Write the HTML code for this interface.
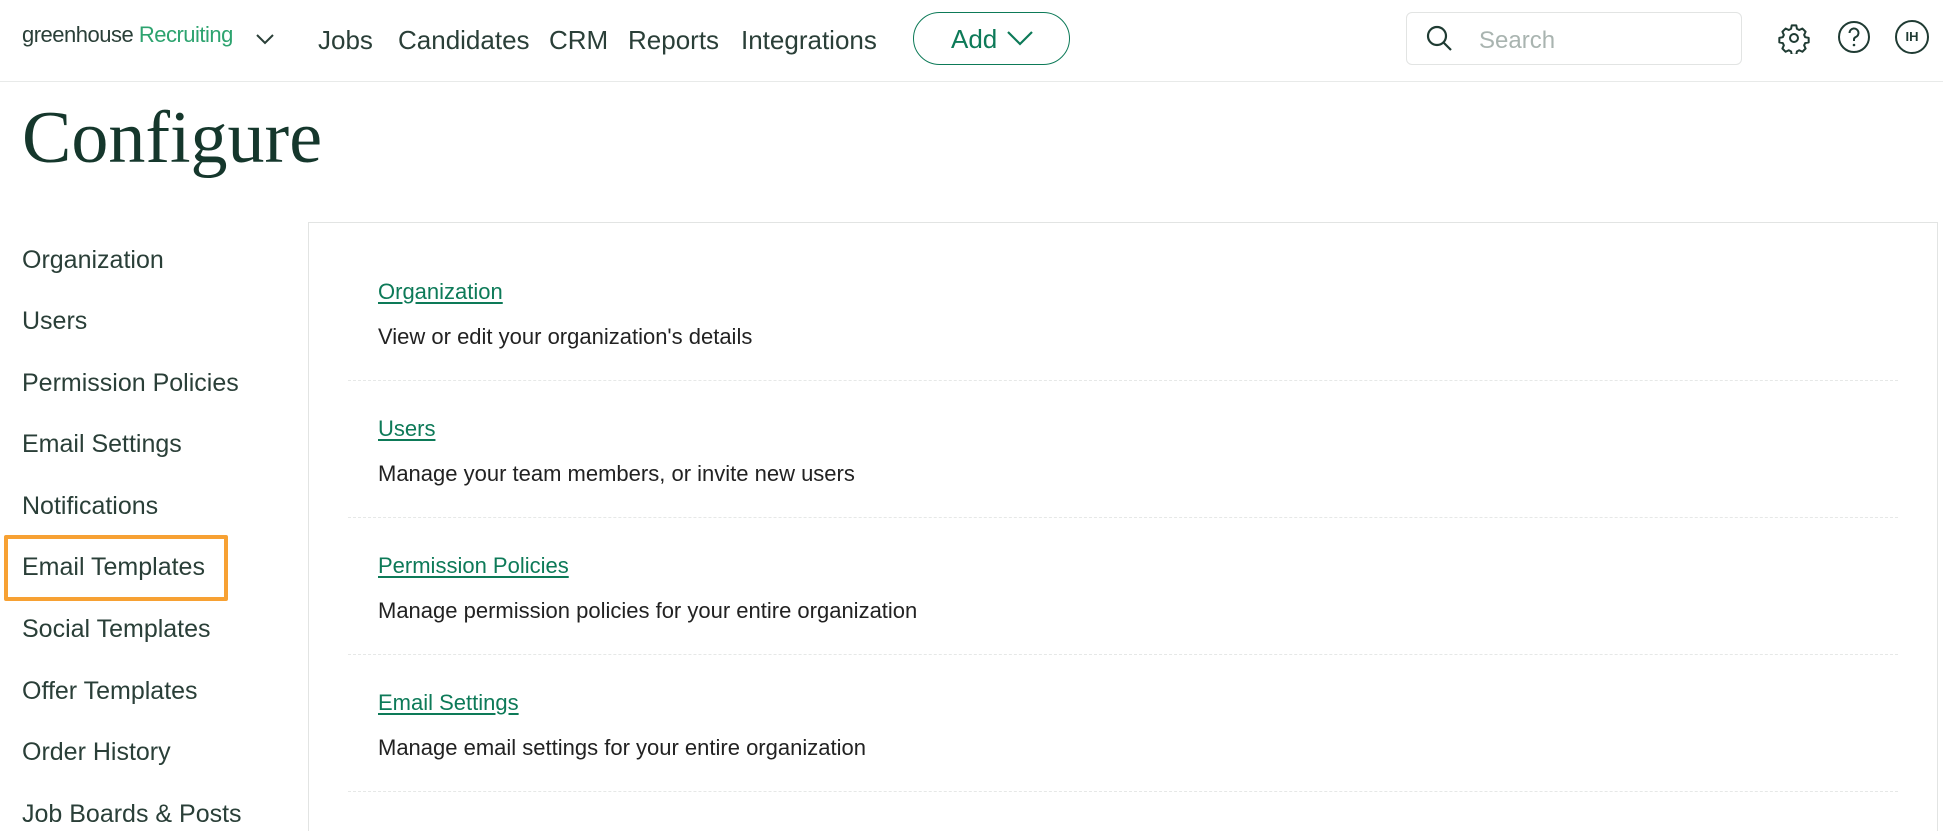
<!DOCTYPE html>
<html style="width:1943px;height:831px;overflow:hidden"><head><meta charset="utf-8"><style>
*{margin:0;padding:0;box-sizing:border-box}
body{width:1943px;height:831px;overflow:hidden;background:#fff;font-family:"Liberation Sans",sans-serif;color:#1f2f2a;position:relative}
.a{position:absolute;white-space:nowrap}
.hdr{position:absolute;left:0;top:0;width:1943px;height:82px;border-bottom:1px solid #e8eae9}
.nav{font-size:26px;color:#2a3f38;top:25px}
.side{font-size:25px;color:#2a3f38;left:22px}
.lnk{left:378px;font-size:22px;color:#0d7a58;text-decoration:underline;text-underline-offset:3px}
.desc{left:378px;font-size:22px;color:#222}
.div{position:absolute;left:348px;width:1550px;height:0;border-top:1px dashed #e6e8e7}
</style></head><body>
<div class="hdr"></div>
<div class="a" style="left:22px;top:22px;font-size:22px;color:#2a3f38;letter-spacing:-0.5px">greenhouse <span style="color:#2da36f">Recruiting</span></div>
<svg class="a" style="left:255px;top:32px" width="20" height="14" viewBox="0 0 20 14"><path d="M2 3l8 8 8-8" fill="none" stroke="#2a3f38" stroke-width="2"/></svg>
<div class="a nav" style="left:318px">Jobs</div>
<div class="a nav" style="left:398px">Candidates</div>
<div class="a nav" style="left:549px">CRM</div>
<div class="a nav" style="left:628px">Reports</div>
<div class="a nav" style="left:741px">Integrations</div>
<div class="a" style="left:913px;top:12px;width:157px;height:53px;border:1.5px solid #0d7a58;border-radius:27px"></div>
<div class="a" style="left:951px;top:24px;font-size:26px;color:#0d7a58">Add</div>
<svg class="a" style="left:1006px;top:30px" width="28" height="16" viewBox="0 0 28 16"><path d="M2 2l12 12 12-12" fill="none" stroke="#0d7a58" stroke-width="2.2"/></svg>
<div class="a" style="left:1406px;top:12px;width:336px;height:53px;border:1px solid #e2e4e3;border-radius:6px"></div>
<svg class="a" style="left:1425px;top:24px" width="30" height="30" viewBox="0 0 30 30"><circle cx="12" cy="12" r="9" fill="none" stroke="#1f3b33" stroke-width="2.2"/><path d="M18.5 18.5l7.5 7.5" stroke="#1f3b33" stroke-width="2.2"/></svg>
<div class="a" style="left:1479px;top:27px;font-size:24px;color:#a9b4b0">Search</div>
<svg class="a" style="left:1778px;top:22px" width="32" height="32" viewBox="0 0 24 24"><path d="M10.3 2.5h3.4l.5 2.6 1.7.9 2.4-1.1 2.4 2.4-1.1 2.4.8 1.7 2.6.5v3.4l-2.6.5-.8 1.7 1.1 2.4-2.4 2.4-2.4-1.1-1.7.9-.5 2.6h-3.4l-.5-2.6-1.7-.9-2.4 1.1-2.4-2.4 1.1-2.4-.8-1.7-2.6-.5v-3.4l2.6-.5.8-1.7-1.1-2.4 2.4-2.4 2.4 1.1 1.7-.9z" fill="none" stroke="#1f3b33" stroke-width="1.5" stroke-linejoin="round"/><circle cx="12" cy="12" r="3" fill="none" stroke="#1f3b33" stroke-width="1.5"/></svg>
<svg class="a" style="left:1837px;top:20px" width="34" height="34" viewBox="0 0 34 34"><circle cx="17" cy="17" r="15" fill="none" stroke="#1f3b33" stroke-width="2"/><path d="M12.5 13a4.5 4.5 0 1 1 6 4.2c-1 .5-1.5 1.2-1.5 2.3v1.5" fill="none" stroke="#1f3b33" stroke-width="2"/><circle cx="17" cy="25" r="1.3" fill="#1f3b33"/></svg>
<div class="a" style="left:1895px;top:20px;width:34px;height:34px;border:2px solid #1f3b33;border-radius:50%;font-size:13px;font-weight:bold;color:#1f3b33;text-align:center;line-height:30px">IH</div>
<div class="a" style="left:22px;top:96px;font-family:'Liberation Serif',serif;font-size:74px;color:#15372c">Configure</div>
<div class="a side" style="top:246px">Organization</div>
<div class="a side" style="top:307px">Users</div>
<div class="a side" style="top:369px">Permission Policies</div>
<div class="a side" style="top:430px">Email Settings</div>
<div class="a side" style="top:492px">Notifications</div>
<div class="a side" style="top:553px">Email Templates</div>
<div class="a side" style="top:615px">Social Templates</div>
<div class="a side" style="top:677px">Offer Templates</div>
<div class="a side" style="top:738px">Order History</div>
<div class="a side" style="top:800px">Job Boards &amp; Posts</div>
<div class="a" style="left:4px;top:535px;width:224px;height:66px;border:4px solid #f7a133;border-radius:2px"></div>
<div class="a" style="left:308px;top:222px;width:1630px;height:620px;border:1px solid #e2e4e3;border-bottom:none"></div>
<div class="a lnk" style="top:279px">Organization</div>
<div class="a desc" style="top:324px">View or edit your organization's details</div>
<div class="div" style="top:380px"></div>
<div class="a lnk" style="top:416px">Users</div>
<div class="a desc" style="top:461px">Manage your team members, or invite new users</div>
<div class="div" style="top:517px"></div>
<div class="a lnk" style="top:553px">Permission Policies</div>
<div class="a desc" style="top:598px">Manage permission policies for your entire organization</div>
<div class="div" style="top:654px"></div>
<div class="a lnk" style="top:690px">Email Settings</div>
<div class="a desc" style="top:735px">Manage email settings for your entire organization</div>
<div class="div" style="top:791px"></div>
</body></html>
